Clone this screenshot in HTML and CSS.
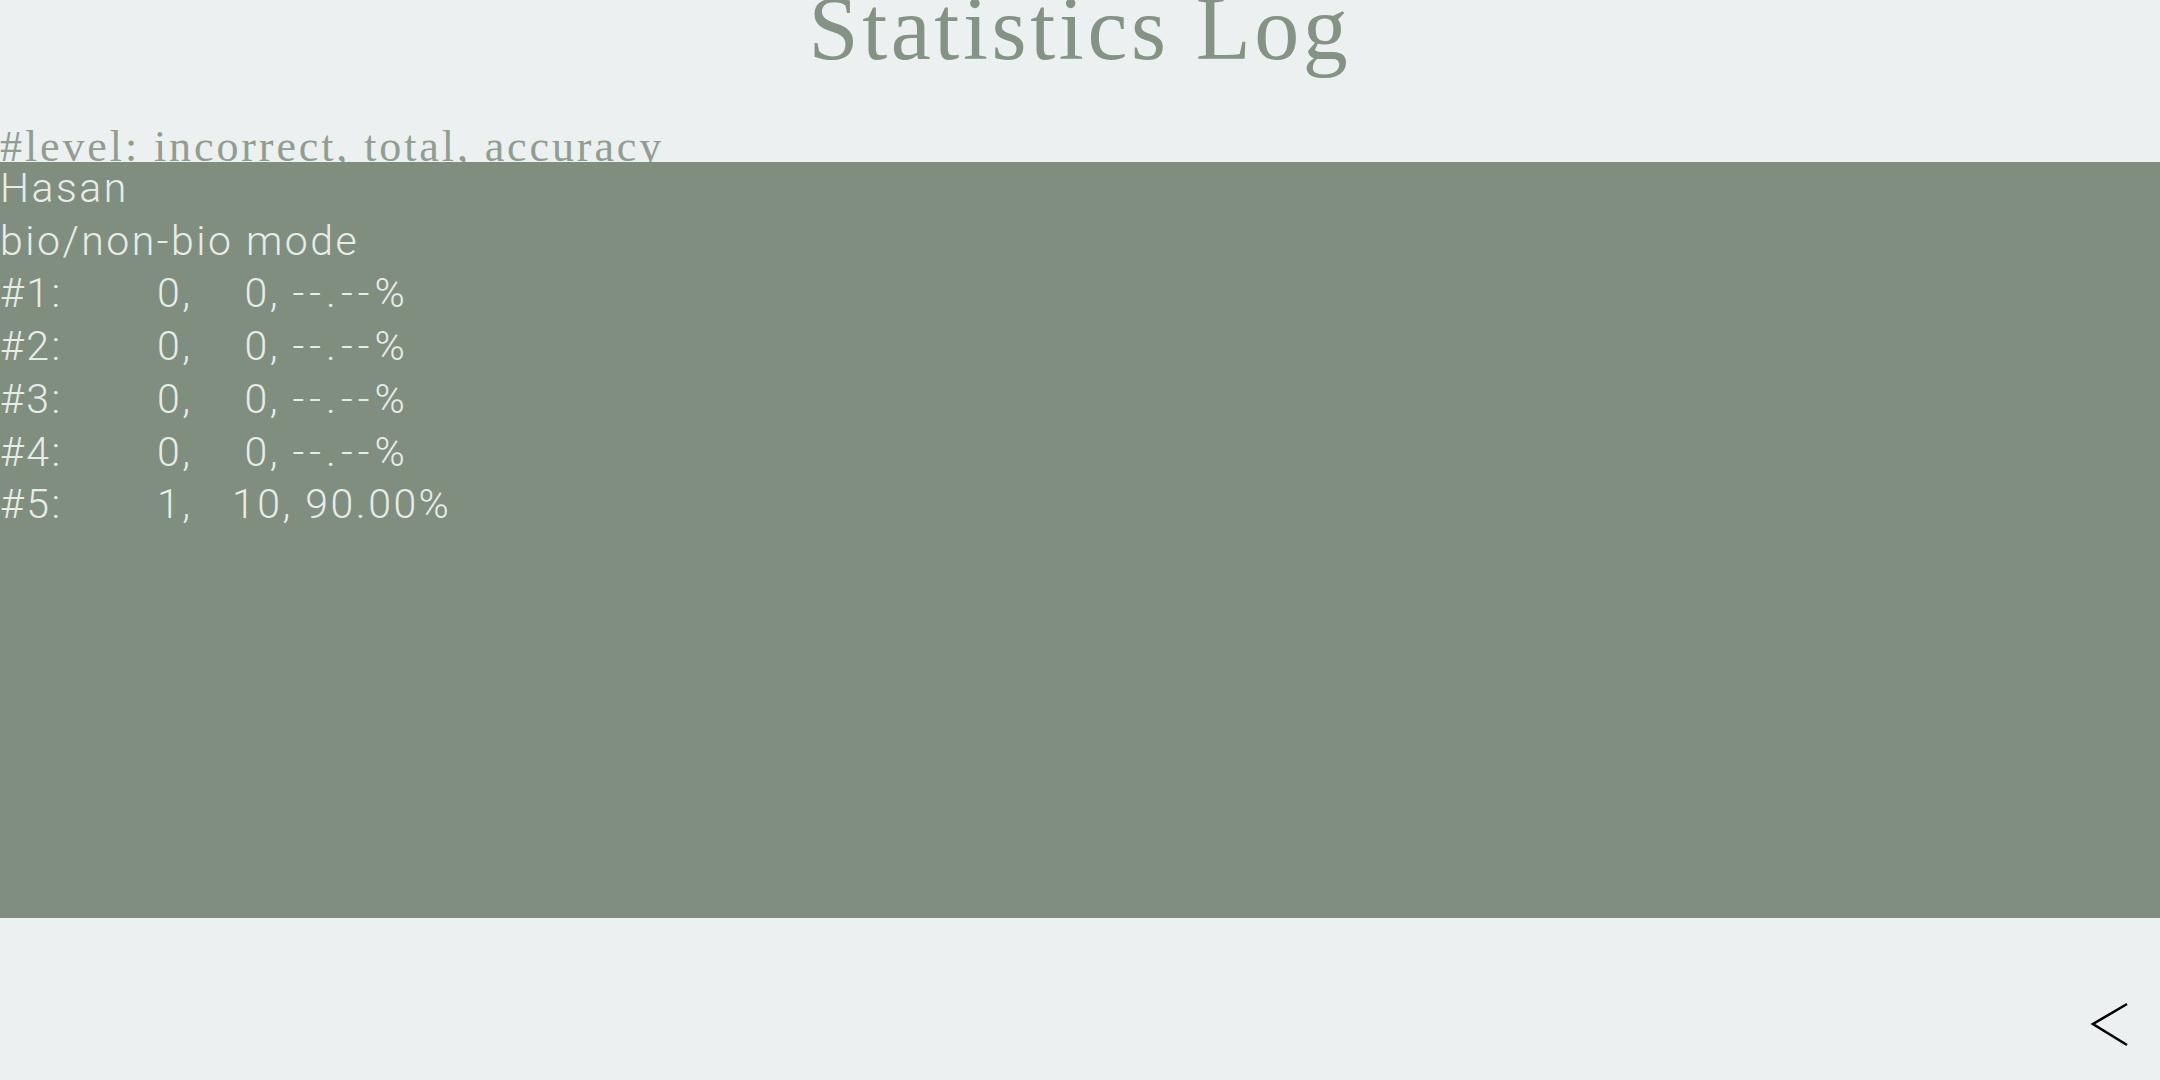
FILE: index.html
```html
<!DOCTYPE html>
<html lang="en">
<head>
<meta charset="utf-8">
<title>Statistics Log</title>
<link rel="stylesheet" href="styles.css">
</head>
<body>
<div class="page">
  <h1 class="title">Statistics Log</h1>
  <div class="legend">#level: incorrect, total, accuracy</div>
  <section class="panel">
    <div class="line">Hasan</div>
    <div class="line">bio/non-bio mode</div>
    <div class="row"><span class="lvl">#1:</span><span class="num">0,</span><span class="rest"> 0, <span class="na">--.--%</span></span></div>
    <div class="row"><span class="lvl">#2:</span><span class="num">0,</span><span class="rest"> 0, <span class="na">--.--%</span></span></div>
    <div class="row"><span class="lvl">#3:</span><span class="num">0,</span><span class="rest"> 0, <span class="na">--.--%</span></span></div>
    <div class="row"><span class="lvl">#4:</span><span class="num">0,</span><span class="rest"> 0, <span class="na">--.--%</span></span></div>
    <div class="row"><span class="lvl">#5:</span><span class="num">1,</span><span class="rest">10, 90.00%</span></div>
  </section>
  <footer class="footer">
    <button class="back" aria-label="Back">
      <svg width="40" height="46" viewBox="0 0 40 46"><polyline points="37,2 3,22 37,43" fill="none" stroke="#000" stroke-width="2.6"/></svg>
    </button>
  </footer>
</div>
</body>
</html>
```

FILE: styles.css
```css
html, body {
  margin: 0;
  padding: 0;
  background: #ecf0f0;
}
.page {
  width: 2160px;
  height: 1080px;
  display: flex;
  flex-direction: column;
  overflow: hidden;
}
.title {
  margin: 0;
  height: 57px;
  line-height: 57px;
  text-align: center;
  font-family: "Liberation Serif", serif;
  font-weight: 400;
  font-size: 90px;
  letter-spacing: 3.6px;
  color: #849384;
  white-space: nowrap;
}
.legend {
  margin-top: 60px;
  height: 45px;
  line-height: 60px;
  overflow: hidden;
  font-family: "Liberation Serif", serif;
  font-size: 44px;
  letter-spacing: 2.9px;
  color: #919d91;
  white-space: nowrap;
}
.panel {
  height: 756px;
  background: #808e80;
  color: #e7ece7;
  font-family: Roboto, sans-serif;
  font-weight: 300;
  font-size: 41px;
  letter-spacing: 2.5px;
  line-height: 52.7px;
}
.line {
  white-space: nowrap;
}
.row {
  display: grid;
  grid-template-columns: 157px 75px auto;
  white-space: pre;
}
.na {
  letter-spacing: 5px;
}
.footer {
  flex: 1;
  display: flex;
  justify-content: flex-end;
  align-items: flex-end;
  padding: 0 30px 32px 0;
}
.back {
  border: 0;
  background: none;
  padding: 0;
  margin: 0;
  width: 40px;
  height: 46px;
  cursor: pointer;
}
.back svg {
  display: block;
}
```
